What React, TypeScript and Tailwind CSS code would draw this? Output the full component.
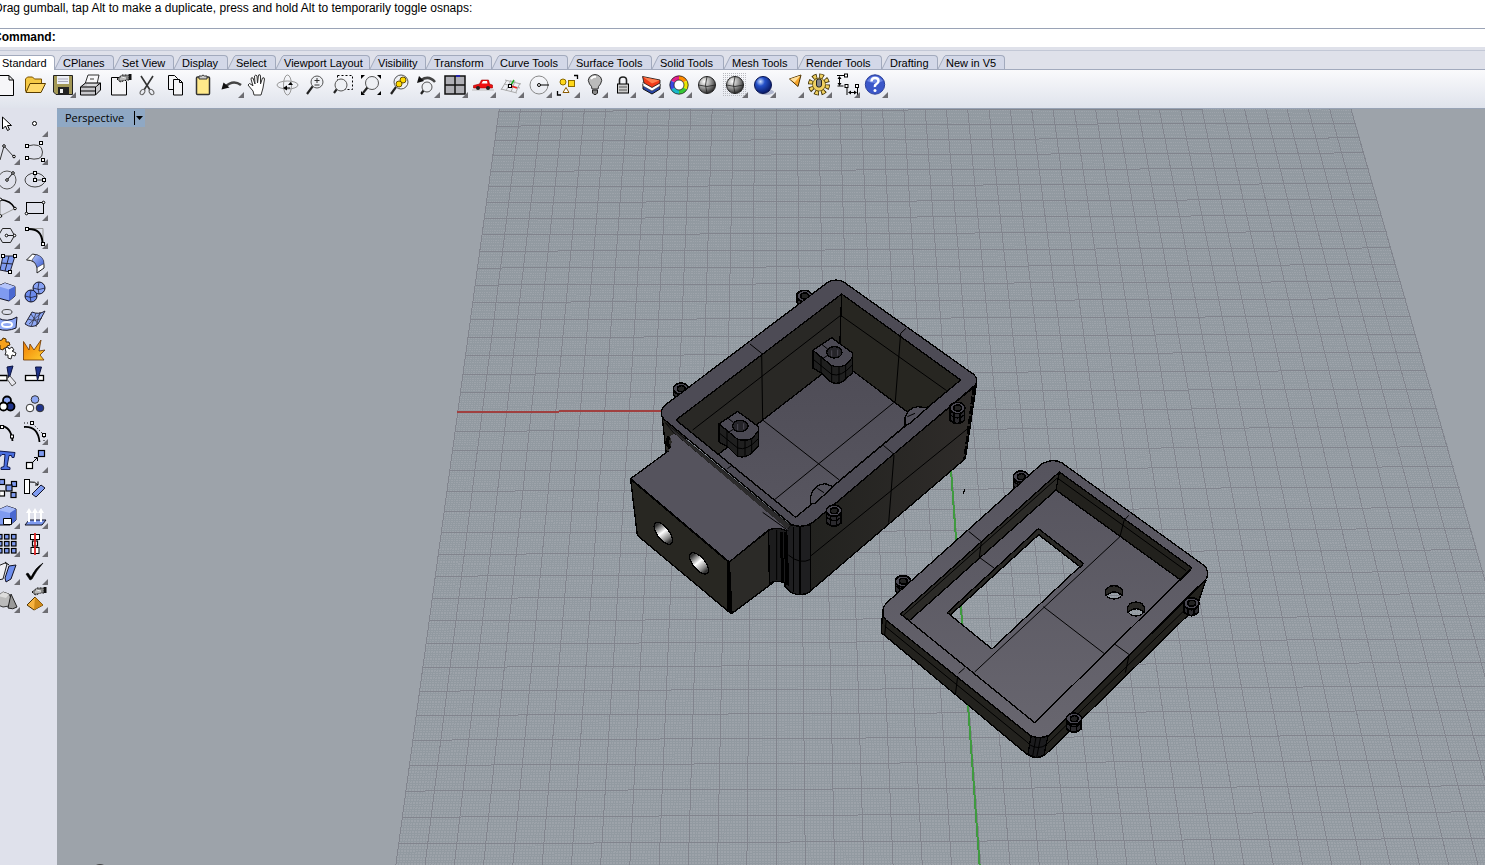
import type { ReactNode } from "react";

interface Tool {
  name: string;
  menu?: boolean;
  icon: ReactNode;
}

const TABS = [
  { label: "CPlanes", width: "w-[59px]" },
  { label: "Set View", width: "w-[60px]" },
  { label: "Display", width: "w-[54px]" },
  { label: "Select", width: "w-[48px]" },
  { label: "Viewport Layout", width: "w-[94px]" },
  { label: "Visibility", width: "w-[56px]" },
  { label: "Transform", width: "w-[66px]" },
  { label: "Curve Tools", width: "w-[76px]" },
  { label: "Surface Tools", width: "w-[84px]" },
  { label: "Solid Tools", width: "w-[72px]" },
  { label: "Mesh Tools", width: "w-[74px]" },
  { label: "Render Tools", width: "w-[84px]" },
  { label: "Drafting", width: "w-[56px]" },
  { label: "New in V5", width: "w-[67px]" },
];

// small square used for control points
const Pt = ({ x, y }: { x: number; y: number }) => (
  <rect x={x - 1.5} y={y - 1.5} width="3" height="3" fill="#fff" stroke="#000" />
);

const Box = ({ x, y, s = 5, fill = "#7f9bf0" }: { x: number; y: number; s?: number; fill?: string }) => (
  <rect x={x} y={y} width={s} height={s} fill={fill} stroke="#000" strokeWidth="1.2" />
);

const Lens = ({ x, y, r = 6, hx = 6, hy = 23 }: { x: number; y: number; r?: number; hx?: number; hy?: number }) => (
  <>
    <path d={`M${x - r * 0.7} ${y + r * 0.7}L${hx} ${hy}`} stroke="#222" strokeWidth="2.2" />
    <circle cx={x} cy={y} r={r} fill="#eef0f4" stroke="#555" />
  </>
);

const Hand = ({ x, y }: { x: number; y: number }) => (
  <g transform={`translate(${x} ${y})`}>
    <path d="M0 5L5 1h7v5H8L4 8 2 7z" fill="#888" stroke="#111" strokeDasharray="2 1" />
    <path d="M4 3l5 1M3 5l6 0" stroke="#eee" />
    <path d="M12 0h2.500v6H12z" fill="#111" />
  </g>
);

const Sphere = ({ fill }: { fill: string }) => (
  <>
    <circle cx="14" cy="14" r="8.5" fill={fill} stroke="#222" />
    <path d="M5.500 14q8.500 3 17 0M14 5.500q-3 8.500 0 17" stroke="#222" fill="none" strokeWidth="0.8" />
  </>
);

const MAIN_TOOLS: Tool[] = [
  { name: "New", icon: <path d="M3 4.500H16l4.500 4.500V24.500H3zM16 4.500V9h4.500" fill="#f6f6f8" stroke="#000" /> },
  {
    name: "Open",
    icon: (
      <>
        <path d="M4.500 20.500V8l2-2h5l2 2h7v4" fill="#f5c945" stroke="#7a5200" />
        <path d="M5 21.500L9 12.500h15.500L20 21.500z" fill="#ffd968" stroke="#5a3d00" />
      </>
    ),
  },
  {
    name: "Save",
    menu: true,
    icon: (
      <>
        <path d="M4.500 4.500h19v19H7l-2.500-2.500z" fill="#a39856" stroke="#222" />
        <rect x="8" y="5" width="12" height="8" fill="#eceef4" />
        <path d="M9 8h10M9 10.500h10" stroke="#aab" />
        <rect x="9" y="16" width="11" height="7" fill="#222" />
        <rect x="11" y="18" width="3" height="4" fill="#eee" />
      </>
    ),
  },
  {
    name: "Print",
    icon: (
      <>
        <path d="M8 13L11 4h11l-2 9z" fill="#f8f8fa" stroke="#333" />
        <path d="M3.500 16l5-4h15v7l-5 5h-15z" fill="#c8c8cc" stroke="#000" />
        <path d="M3.500 16h15v8M18.500 16l5-4M4 20h14" stroke="#000" fill="none" />
        <path d="M10 14h10" stroke="#eee" />
        <path d="M13 8h4" stroke="#999" strokeWidth="2" />
      </>
    ),
  },
  {
    name: "Document Properties",
    icon: (
      <>
        <path d="M6.500 6.500h11l4 4v13.500h-15z" fill="#f4f4f6" stroke="#000" />
        <Hand x={12} y={3} />
      </>
    ),
  },
  {
    name: "Cut",
    icon: (
      <>
        <path d="M8 5l9 14M20 5l-9 14" stroke="#333" strokeWidth="1.600" />
        <ellipse cx="9.500" cy="21" rx="2" ry="3" fill="none" stroke="#666" transform="rotate(35 9.500 21)" />
        <ellipse cx="18.500" cy="21" rx="2" ry="3" fill="none" stroke="#666" transform="rotate(-35 18.500 21)" />
      </>
    ),
  },
  {
    name: "Copy",
    icon: (
      <>
        <path d="M7.500 4.500h6l3 3v11h-9z" fill="#f4f4f6" stroke="#000" />
        <path d="M12.500 8.500h6l3 3v12.500h-9zM18.500 8.500v3h3" fill="#f4f4f6" stroke="#000" />
      </>
    ),
  },
  {
    name: "Paste",
    icon: (
      <>
        <rect x="7.500" y="6" width="13" height="17.500" rx="1" fill="#ffe98a" stroke="#333" strokeWidth="1.500" />
        <path d="M10 5h2.500q1.500-2 3 0H18v3h-8z" fill="#ccc" stroke="#333" />
      </>
    ),
  },
  {
    name: "Undo",
    menu: true,
    icon: (
      <>
        <path d="M8 16q8-8 16-2" fill="none" stroke="#444" strokeWidth="2.500" />
        <path d="M4.500 18.500l2-7 6 5z" fill="#111" />
      </>
    ),
  },
  {
    name: "Pan",
    icon: (
      <path
        d="M9 24l-1-4-5-6q1-3 4 0l1 1L6 8q0-2 2-1l2 6-.5-8q1.500-2 2.500 0l.5 7 1-8q2-1 2 1v8l2-6q2-1 2 1l-1.500 9-2 7z"
        fill="#fff"
        stroke="#333"
      />
    ),
  },
  {
    name: "Rotate View",
    icon: (
      <g fill="none" stroke="#999">
        <ellipse cx="14.500" cy="14" rx="10.500" ry="4" />
        <ellipse cx="14.500" cy="14" rx="4" ry="10" />
        <path d="M10 17l4-2.500v5zM17.500 11l-2.500 3h5z" fill="#000" stroke="none" />
        <path d="M13 17h4" stroke="#000" />
      </g>
    ),
  },
  {
    name: "Zoom Dynamic",
    icon: (
      <>
        <Lens x={16} y={11} />
        <path d="M13.500 9.500h5M16 7v5M13.500 14h5" stroke="#333" />
      </>
    ),
  },
  {
    name: "Zoom Window",
    icon: (
      <>
        <rect x="8.500" y="4.500" width="15" height="14" fill="none" stroke="#000" strokeDasharray="2 2" />
        <Lens x={12} y={14} hx={5} hy={22} />
      </>
    ),
  },
  {
    name: "Zoom Extents",
    icon: (
      <>
        <Lens x={15} y={12} r={6.5} hx={6} hy={22} />
        <path d="M4 4h4l-4 4zM24 4h-4l4 4zM4 24h4l-4-4zM24 24h-4l4-4z" fill="#000" />
      </>
    ),
  },
  {
    name: "Zoom Selected",
    icon: (
      <>
        <Lens x={16} y={11} r={7} />
        <circle cx="18" cy="9" r="3" fill="#ffd900" stroke="#665000" />
        <circle cx="14" cy="13" r="3" fill="#ffd900" stroke="#665000" />
      </>
    ),
  },
  {
    name: "Undo View Change",
    menu: true,
    icon: (
      <>
        <Lens x={14} y={16} r={5} hx={8} hy={23} />
        <path d="M8 9q8-5 14 2" fill="none" stroke="#444" strokeWidth="2.500" />
        <path d="M4 12l2-7 5 5z" fill="#111" />
      </>
    ),
  },
  {
    name: "4 View",
    menu: true,
    icon: (
      <>
        <rect x="4" y="5" width="20" height="18" fill="#b0b0b6" stroke="#111" strokeWidth="1.500" />
        <path d="M14 5v18M4 14h20" stroke="#111" strokeWidth="1.500" />
        <path d="M15 5h4" stroke="#22a" strokeWidth="2" />
      </>
    ),
  },
  {
    name: "Named View",
    menu: true,
    icon: (
      <>
        <path d="M3 19h22" stroke="#bbb" />
        <path d="M4.500 17v-2.500l6-1.500 2-4h7l1 4 3 1v3z" fill="#f01010" stroke="#a00000" strokeWidth="0.600" />
        <path d="M14 10h4l.5 2.500h-6z" fill="#fff" />
        <circle cx="9" cy="17" r="2" fill="#222" />
        <circle cx="19" cy="17" r="2" fill="#222" />
      </>
    ),
  },
  {
    name: "Set CPlane",
    menu: true,
    icon: (
      <>
        <path d="M4 19l6-10M9 20l5-11M14 21l4-11M19 21l4-9M8 9l16 4M7 13l16 4M4 18l16 4" stroke="#aaa" fill="none" />
        <path d="M14 15l6 2" stroke="#e22" strokeWidth="1.500" />
        <path d="M14 14l3-5" stroke="#2a2" strokeWidth="1.500" />
        <Pt x={13} y={15} />
      </>
    ),
  },
  {
    name: "Circle Radius",
    menu: true,
    icon: (
      <>
        <circle cx="14" cy="14" r="9" fill="none" stroke="#888" />
        <path d="M14 14h10" stroke="#000" />
        <circle cx="14" cy="14" r="1.500" fill="#fff" stroke="#000" />
      </>
    ),
  },
  {
    name: "Select",
    menu: true,
    icon: (
      <>
        <circle cx="10" cy="11" r="3" fill="#ffd81a" stroke="#8a6a00" />
        <rect x="15.500" y="9.500" width="6" height="6" fill="#ffd81a" stroke="#8a6a00" />
        <path d="M13 16.500l3 5h-6z" fill="#fff" stroke="#8a5a00" />
        <path d="M21 4.500h3.500V8M4.500 20v4H8" fill="none" stroke="#000" strokeWidth="1.300" />
      </>
    ),
  },
  {
    name: "Hide",
    menu: true,
    icon: (
      <>
        <path d="M11 18q0-3-2.500-5Q6 9 8.500 6q5.500-5 11 0 2.500 3 0 7-2.500 2-2.500 5z" fill="#bbb" stroke="#333" />
        <path d="M10 8q2-3 5-2" stroke="#fff" fill="none" strokeWidth="2" />
        <path d="M11.500 19h5v3l-1.500 1.500h-2l-1.500-1.500z" fill="#888" stroke="#222" />
      </>
    ),
  },
  {
    name: "Lock",
    menu: true,
    icon: (
      <>
        <path d="M10.500 13V9q0-3 3.500-3t3.500 3v4" fill="none" stroke="#222" strokeWidth="1.600" />
        <rect x="8.500" y="13" width="11" height="9" fill="#ccc" stroke="#000" />
        <path d="M10 16h8M10 19h8" stroke="#555" />
      </>
    ),
  },
  {
    name: "Layers",
    menu: true,
    icon: (
      <>
        <path d="M6 13v5l9 5 8-5v-5z" fill="#2846a8" stroke="#111" />
        <path d="M6 11v4l9 5 8-5v-3z" fill="#fff" stroke="#333" strokeWidth="0.600" />
        <path d="M5.500 5.500L7 12l8 4.500 8-4.500V9z" fill="#ef3a18" stroke="#111" strokeWidth="0.800" />
        <path d="M6 6l9 6.500 7.500-3z" fill="#ff8050" />
      </>
    ),
  },
  {
    name: "Object Properties",
    menu: true,
    icon: (
      <g fill="none" strokeWidth="4.500">
        <path d="M14 7a7 7 0 0 1 6 3.500" stroke="#ff8a00" />
        <path d="M20 10.500a7 7 0 0 1 0 7" stroke="#e9e600" />
        <path d="M20 17.500a7 7 0 0 1-6 3.500" stroke="#37c837" />
        <path d="M14 21a7 7 0 0 1-6-3.500" stroke="#18b9c8" />
        <path d="M8 17.500a7 7 0 0 1 0-7" stroke="#3a48e0" />
        <path d="M8 10.500A7 7 0 0 1 14 7" stroke="#e0208a" />
        <circle cx="14" cy="14" r="9.200" stroke="#222" strokeWidth="0.800" />
        <circle cx="14" cy="14" r="5" fill="#fff" stroke="#222" strokeWidth="0.800" />
      </g>
    ),
  },
  { name: "Shade", icon: <Sphere fill="url(#greyBall)" /> },
  {
    name: "Shade Options",
    menu: true,
    icon: (
      <>
        <rect x="2" y="2" width="24" height="24" fill="url(#dots)" />
        <Sphere fill="url(#greyBall)" />
      </>
    ),
  },
  {
    name: "Render",
    menu: true,
    icon: (
      <>
        <ellipse cx="17" cy="21" rx="8" ry="3" fill="#aeb4cc" />
        <circle cx="14" cy="14" r="8.500" fill="url(#blueBall)" stroke="#0a1550" />
      </>
    ),
  },
  {
    name: "Spotlight",
    menu: true,
    icon: (
      <>
        <path d="M12.500 8l11.500-4-3 11.500z" fill="#f7a52b" stroke="#4a3000" />
        <path d="M13 8l10.500-3.500-6 7z" fill="#ffdf9a" />
      </>
    ),
  },
  {
    name: "Options",
    menu: true,
    icon: (
      <>
        <circle cx="14" cy="13.500" r="8.500" fill="none" stroke="#3a2c00" strokeWidth="5" strokeDasharray="4.375 2.300" />
        <circle cx="14" cy="13.500" r="8.500" fill="none" stroke="#f0d060" strokeWidth="3.400" strokeDasharray="2.775 3.900" strokeDashoffset="-0.800" />
        <circle cx="14" cy="13.500" r="6.500" fill="#f0d060" stroke="#4a3a00" strokeWidth="0.600" />
        <rect x="11.500" y="8" width="5" height="8" rx="2" fill="#888" stroke="#222" />
      </>
    ),
  },
  {
    name: "Dimension",
    menu: true,
    icon: (
      <>
        <path d="M4 4.500h10M6.500 7v7M4.500 15h6M14 15v9M24.500 15v9M16 21.500h7" stroke="#000" fill="none" />
        <path d="M6.500 5l-2 3h4zM6.500 15l-2-3h4zM15 21.500l3-2v4zM24 21.500l-3-2v4z" fill="#000" />
        <Pt x={13} y={4.5} />
        <Pt x={13.5} y={15} />
        <Pt x={24} y={15} />
      </>
    ),
  },
  {
    name: "Help",
    menu: true,
    icon: (
      <>
        <circle cx="14" cy="13.500" r="9.700" fill="#3b57c9" stroke="#2a3f9a" />
        <path d="M6 10q8-10 16 0-8 4-16 0" fill="#6c86e4" />
        <path d="M10.500 10.500q0-3.500 3.500-3.500t3.500 3q0 2-2 3T14 16" fill="none" stroke="#fff" strokeWidth="2.400" />
        <circle cx="14" cy="19.500" r="1.500" fill="#fff" />
      </>
    ),
  },
];

// listed left to right, two per row
const SIDE_TOOLS: Tool[] = [
  { name: "Cancel", icon: <path d="M9.500 7v12l3-3 2 4.500 2-1-2-4h4z" fill="#fff" stroke="#000" /> },
  { name: "Point", menu: true, icon: <circle cx="13.500" cy="13.500" r="2" fill="#fff" stroke="#000" /> },
  {
    name: "Polyline",
    menu: true,
    icon: (
      <>
        <path d="M7 22l4-14 10 11" fill="none" stroke="#333" />
        <circle cx="11" cy="8" r="1.300" fill="#fff" stroke="#000" />
        <circle cx="21" cy="18.500" r="1.300" fill="#fff" stroke="#000" />
      </>
    ),
  },
  {
    name: "Curve",
    menu: true,
    icon: (
      <>
        <path d="M6 8q15-4 15.500 6T6 20" fill="none" stroke="#444" />
        <Pt x={6} y={8} />
        <Pt x={20} y={5} />
        <Pt x={6} y={20} />
        <Pt x={22} y={22} />
      </>
    ),
  },
  {
    name: "Circle",
    menu: true,
    icon: (
      <>
        <circle cx="14" cy="14" r="9" fill="none" stroke="#555" />
        <path d="M14 14l6-7" stroke="#000" />
        <circle cx="14" cy="14" r="1.300" fill="#fff" stroke="#000" />
        <circle cx="20" cy="7" r="1.300" fill="#fff" stroke="#000" />
      </>
    ),
  },
  {
    name: "Ellipse",
    menu: true,
    icon: (
      <>
        <ellipse cx="14" cy="14" rx="10" ry="7" fill="none" stroke="#444" />
        <path d="M14 7v7h9" fill="none" stroke="#444" />
        <Pt x={14} y={7} />
        <Pt x={14} y={14} />
        <Pt x={23} y={14} />
      </>
    ),
  },
  {
    name: "Arc",
    menu: true,
    icon: (
      <>
        <path d="M7 22V5.500" stroke="#888" />
        <path d="M7 5.500q11 1 15 9" fill="none" stroke="#000" strokeWidth="1.500" />
        <path d="M22 14.500L7 22" stroke="#999" />
        <circle cx="22" cy="14.500" r="1.300" fill="#fff" stroke="#000" />
        <circle cx="7.500" cy="22" r="1.300" fill="#fff" stroke="#000" />
        <circle cx="7.500" cy="5.500" r="1.300" fill="#fff" stroke="#000" />
      </>
    ),
  },
  {
    name: "Rectangle",
    menu: true,
    icon: (
      <>
        <rect x="5.500" y="8.500" width="17" height="11" fill="none" stroke="#000" />
        <circle cx="22.500" cy="8.500" r="1.300" fill="#fff" stroke="#000" />
        <circle cx="5.500" cy="19.500" r="1.300" fill="#fff" stroke="#000" />
      </>
    ),
  },
  {
    name: "Polygon",
    menu: true,
    icon: (
      <>
        <path d="M5.500 13.500l4-7h8l4 7-4 7h-8zM13.500 13.500H21" fill="none" stroke="#222" />
        <circle cx="13.500" cy="13.500" r="1.300" fill="#fff" stroke="#000" />
        <circle cx="21.500" cy="13.500" r="1.300" fill="#fff" stroke="#000" />
      </>
    ),
  },
  {
    name: "Fillet",
    menu: true,
    icon: (
      <>
        <path d="M6 6.500h16v16" fill="none" stroke="#999" />
        <path d="M6 7q15-1 15.500 14" fill="none" stroke="#000" strokeWidth="2" />
        <Pt x={6} y={7} />
        <Pt x={22} y={22} />
      </>
    ),
  },
  {
    name: "Surface",
    menu: true,
    icon: (
      <>
        <path d="M10 6h12l-5 16-10-2z" fill="#7f9bf0" stroke="#223" />
        <path d="M8.500 13l11 1M16 6l-4 15" stroke="#223" fill="none" />
        <Pt x={10} y={6} />
        <Pt x={22} y={6} />
        <Pt x={17} y={22} />
      </>
    ),
  },
  {
    name: "Sweep",
    menu: true,
    icon: (
      <>
        <path d="M5.500 10l6-6q11 1 11.500 11v3l-7 5v-5q-1-8-10.500-8z" fill="#fff" stroke="#222" />
        <path d="M11 10l4-5.500q8 2 8 9l-7 4q-1-5-5-7.500z" fill="url(#blueSheet)" stroke="#334" strokeWidth="0.600" />
      </>
    ),
  },
  {
    name: "Box",
    menu: true,
    icon: (
      <>
        <path d="M5 8l7-3 10 3.500V18l-6 5-11-3z" fill="#7f9bf0" stroke="#112" />
        <path d="M5 8l7-3 10 3.500-6 3z" fill="#b4c4fa" />
        <path d="M16 11.500l6-3V18l-6 5z" fill="#4a68d0" />
      </>
    ),
  },
  {
    name: "Boolean",
    menu: true,
    icon: (
      <g stroke="#112">
        <circle cx="18" cy="10" r="6" fill="#88a2f4" />
        <circle cx="10" cy="18" r="6" fill="#6c8bec" />
        <path d="M12 10q6 3 12 0M18 4q-2 6 0 12M4 18q6 3 12 0M10 12q-2 6 0 12" fill="none" strokeWidth="0.700" />
      </g>
    ),
  },
  {
    name: "Project",
    menu: true,
    icon: (
      <>
        <ellipse cx="14" cy="6" rx="5" ry="2.500" fill="none" stroke="#444" />
        <path d="M5 12q9 5 19-1l-1 11q-9 4-18 1z" fill="#8ea8f5" stroke="#112" />
        <ellipse cx="14" cy="18.500" rx="5" ry="2.500" fill="#8ea8f5" stroke="#fff" strokeWidth="2" />
      </>
    ),
  },
  {
    name: "Mesh",
    menu: true,
    icon: (
      <>
        <path d="M4 18l7-12q7 3 13-1l-7 13q-6 5-13 0z" fill="#8ea8f5" stroke="#223" />
        <path d="M7 13q7 3 14-1M15 7l-5 14M19 6l-4 15M8 18l12-11M10 8l7 10" fill="none" stroke="#334" strokeWidth="0.800" />
      </>
    ),
  },
  {
    name: "Join",
    icon: (
      <>
        <path d="M5 7l4-1 1-2 3 1v3l3 0 1 3-3 1 0 3-3-1-1 2-3-1V11H5z" fill="#f7a11a" stroke="#4a2c00" />
        <path d="M12 14l3-1 1 2 3-2 2 3-2 1 4 2-1 3-3-1-1 4-3-1 0-3-3 0 1-3z" fill="#fff" stroke="#222" />
      </>
    ),
  },
  {
    name: "Explode",
    icon: <path d="M2.500 26V7.500L8 16l1-6 4 6 7-10-2 11 6-1-5 5 4 5z" fill="url(#blast)" stroke="#6a3300" strokeWidth="0.800" />,
  },
  {
    name: "Trim",
    icon: (
      <>
        <path d="M5 13.500h9v5H5z" fill="#fff" stroke="#000" strokeWidth="1.300" />
        <path d="M14 5l6-1-4 13z" fill="#20348c" stroke="#0a1240" />
        <path d="M14 17l3-3 6 7-4 3z" fill="#e8e8ee" stroke="#555" />
      </>
    ),
  },
  {
    name: "Split",
    icon: (
      <>
        <rect x="4.500" y="13.500" width="18" height="5" fill="#fff" stroke="#000" strokeWidth="1.300" />
        <path d="M14.500 5h6l-4 13.500z" fill="#20348c" stroke="#0a1240" />
      </>
    ),
  },
  {
    name: "Group",
    menu: true,
    icon: (
      <g stroke="#000" strokeWidth="1.800">
        <circle cx="14" cy="10.500" r="4" fill="#8ea8f5" />
        <circle cx="17.500" cy="16.500" r="4" fill="#20348c" />
        <circle cx="10.500" cy="16.500" r="4" fill="#fff" />
      </g>
    ),
  },
  {
    name: "Ungroup",
    icon: (
      <g stroke="#333">
        <circle cx="14" cy="9.500" r="3.800" fill="#8ea8f5" />
        <circle cx="9" cy="18" r="3.800" fill="#fff" />
        <circle cx="19" cy="18" r="3.800" fill="#20348c" />
      </g>
    ),
  },
  {
    name: "Edit Points",
    icon: (
      <>
        <path d="M5 8q13-1 14.500 15" fill="none" stroke="#000" strokeWidth="1.800" />
        <Pt x={9} y={9} />
        <Pt x={19} y={18.5} />
      </>
    ),
  },
  {
    name: "Control Points",
    menu: true,
    icon: (
      <>
        <path d="M3 9q14-1 15.500 15" fill="none" stroke="#000" strokeWidth="1.800" />
        <path d="M3 5h8l12 12v7" fill="none" stroke="#000" strokeDasharray="1 2" />
        <Pt x={11} y={5} />
        <Pt x={23} y={17} />
      </>
    ),
  },
  {
    name: "Text",
    icon: (
      <path d="M6 5l16 1.500-1 5h-2l-.5-2h-2.500l-2 11 3 1v2H8v-2l3-1 1-12H9l-2 2z" fill="#4a6fe0" stroke="#111a50" />
    ),
  },
  {
    name: "Move",
    menu: true,
    icon: (
      <>
        <Box x={5.5} y={16.5} s={6} fill="#fff" />
        <Box x={17.5} y={4.5} s={6} />
        <path d="M12 16l4-4M16.500 15v-3.500H13" fill="none" stroke="#000" />
      </>
    ),
  },
  {
    name: "Copy Objects",
    icon: (
      <>
        <Box x={6.5} y={5.5} />
        <Box x={18.5} y={7.5} />
        <Box x={13} y={11} s={6} />
        <Box x={6.5} y={17} fill="#fff" />
        <Box x={18} y={18.5} />
      </>
    ),
  },
  {
    name: "Rotate",
    icon: (
      <>
        <rect x="3.500" y="5.500" width="5" height="14" fill="#fff" stroke="#000" />
        <path d="M11 20l9-9 4 3-9 9z" fill="#7f9bf0" stroke="#112" />
        <path d="M9 8q5-1 8 3M17 7.500V11h-3" fill="none" stroke="#000" />
      </>
    ),
  },
  {
    name: "Solid Edit",
    menu: true,
    icon: (
      <>
        <path d="M5 8l9-4 9 3v11l-6 5H5z" fill="#7f9bf0" stroke="#112" />
        <path d="M5 8l9-4 9 3-6 4z" fill="#a6baf8" />
        <path d="M17 11l6-4v11l-6 5z" fill="#4a68d0" />
        <path d="M10.500 16.500h8v6h-8z" fill="#fff" stroke="#000" />
      </>
    ),
  },
  {
    name: "Extrude",
    menu: true,
    icon: (
      <>
        <path d="M4 23l4-5h17l-4 5z" fill="#7f9bf0" stroke="#112" />
        <path d="M8 20V10M14 20V10M20 20V10" stroke="#fff" strokeWidth="2" />
        <path d="M8 6l3 5H5zM14 6l3 5h-6zM20 6l3 5h-6z" fill="#fff" />
      </>
    ),
  },
  {
    name: "Array",
    menu: true,
    icon: (
      <>
        {[4, 11, 18].map((y) => [4, 11, 18].map((x) => <Box key={`${x}-${y}`} x={x + 0.5} y={y + 0.5} s={4.5} />))}
      </>
    ),
  },
  {
    name: "Align",
    menu: true,
    icon: (
      <>
        <Box x={11.5} y={11} fill="#fff" />
        <rect x="9.500" y="4.500" width="9" height="5" fill="#fff" stroke="#000" />
        <rect x="10" y="17.500" width="8" height="6" fill="#fff" stroke="#000" />
        <path d="M14 3v22" stroke="#d22" strokeWidth="1.800" />
      </>
    ),
  },
  {
    name: "Bend",
    menu: true,
    icon: (
      <>
        <path d="M5 8l7-3 2 1-4 15-5 1z" fill="#f0f0f4" stroke="#222" />
        <path d="M12 20l4-12 7-1-5 14-5 3z" fill="#6f8fee" stroke="#112" />
        <path d="M12 4l4 3" stroke="#000" />
      </>
    ),
  },
  { name: "Check", menu: true, icon: <path d="M5 16l2-1 3 4q4-9 12-14-7 8-11 16l-2 1z" fill="#000" stroke="#000" strokeWidth="0.600" /> },
  {
    name: "Primitives",
    menu: true,
    icon: (
      <>
        <path d="M5 10l5-4 6 2 2 4-2 8-6 1-5-2z" fill="#bbb" stroke="#333" />
        <path d="M5 10l5-4 6 2-3 4z" fill="#ddd" />
        <path d="M18 8l6 13q-4 3-9 1z" fill="#999" stroke="#222" />
      </>
    ),
  },
  {
    name: "Render Tools",
    menu: true,
    icon: (
      <>
        <path d="M14 11l8 8-9 5-7-5z" fill="#f7b340" stroke="#4a3000" />
        <path d="M14 11l-1 13 9-5z" fill="#cf8a1a" />
        <Hand x={11} y={1} />
      </>
    ),
  },
];

function ToolButton({ tool }: { tool: Tool }) {
  return (
    <button type="button" aria-label={tool.name} className="size-7 shrink-0">
      <svg viewBox="0 0 28 28" className="block size-7">
        {tool.icon}
        {tool.menu && <path d="M27 21v6h-6z" fill="#6d6d72" />}
      </svg>
    </button>
  );
}

function TabBar() {
  return (
    <div role="tablist" className="flex h-[19px] items-end overflow-hidden bg-[#dfe1ea] text-[11px] text-black">
      <button
        type="button"
        role="tab"
        aria-selected="true"
        className="h-[15px] w-[55px] shrink-0 rounded-tr-sm border-t border-r border-[#a2aabd] bg-white pl-0.5 text-left leading-[14px]"
      >
        Standard
      </button>
      {TABS.map((tab) => (
        <button
          key={tab.label}
          type="button"
          role="tab"
          aria-selected="false"
          className={`flex h-[15px] shrink-0 border-b border-[#a2aabd] ${tab.width}`}
        >
          <svg viewBox="0 0 8 14" className="h-[14px] w-2 shrink-0">
            <path d="M0 14L6 2Q7 .5 8 .5V14z" fill="#d3d8e8" />
            <path d="M0 14L6 2Q7 .5 8 .5" fill="none" stroke="#a2aabd" />
          </svg>
          <span className="h-[14px] min-w-0 flex-1 rounded-tr border-t border-r border-[#a2aabd] bg-[#d3d8e8] text-left leading-[14px] whitespace-nowrap">
            {tab.label}
          </span>
        </button>
      ))}
      <div className="h-px flex-1 bg-[#a2aabd]" />
    </div>
  );
}

// Construction plane: 40 x 40 major cells, 10 minor cells in each
const VP_X = 776;
const VP_Y = -1914;
const DEPTH = 121.3;

const rowY = (k: number) => (2326 * DEPTH) / (DEPTH - k) + VP_Y;
const leftX = (y: number) => VP_X - 0.1368 * (y - VP_Y);
const rightX = (y: number) => VP_X + 0.2842 * (y - VP_Y);

function rowPath(k: number) {
  const y = rowY(k);
  const slope = 0.0035 + (y - 123) * 0.0000022;
  const x1 = leftX(y);
  const x2 = rightX(y);
  return `M${x1.toFixed(1)} ${y.toFixed(1)}L${x2.toFixed(1)} ${(y - slope * (x2 - x1)).toFixed(1)}`;
}

function colPath(k: number) {
  const slope = -0.1368 + (0.421 * (k + 20)) / 40;
  const at = (y: number) => (VP_X + slope * (y - VP_Y)).toFixed(1);
  return `M${at(80)} 80L${at(871)} 871`;
}

const range = (from: number, to: number) => Array.from({ length: to - from + 1 }, (_, i) => from + i);
const majors = range(-20, 20);
const minors = range(-200, 200).filter((k) => k % 10 !== 0);

const majorGrid = majors.map((k) => rowPath(k) + colPath(k)).join("");
const minorRows = minors.map((k) => rowPath(k / 10)).join("");
const minorCols = minors.map((k) => colPath(k / 10)).join("");

function Post({ x, y }: { x: number; y: number }) {
  return (
    <g transform={`translate(${x} ${y})`}>
      <path d="M-64 -6V48L-38 62 -12 88Q5 98 25 88L54 62V8z" fill="#1f1f1f" />
      <path d="M-64 -6L-8 -44 52 0Q60 10 50 20L35 38Q15 46-8 40z" fill="#4b4953" />
      <path
        d="M-40 14V62M-8 40V90M14 44V94M34 40V84M-62 22L-8 66Q20 76 54 38M-38 -24L-20 -10M-34 18L-18 8"
        fill="none"
        strokeWidth="3"
      />
      <ellipse cx="0" cy="0" rx="23" ry="17" fill="#26252a" />
      <path d="M-8 -6V12M10 -8V10" stroke="#4b4953" strokeWidth="3" />
    </g>
  );
}

function Lug({ x, y, h = 36 }: { x: number; y: number; h?: number }) {
  return (
    <g transform={`translate(${x} ${y})`} strokeWidth="5">
      <path d={`M-22 0V${h}Q0 ${h + 22} 22 ${h}V0z`} fill="#2b2a2e" />
      <path d={`M-22 ${h - 16}Q0 ${h + 4} 22 ${h - 16}M-10 14V${h + 8}M8 14V${h + 8}`} fill="none" strokeWidth="4" />
      <ellipse cx="0" cy="0" rx="23" ry="17" fill="#4a4852" />
      <ellipse cx="1" cy="0" rx="12" ry="9" fill="#222" />
    </g>
  );
}

function BottomCase() {
  return (
    <g transform="translate(620 270) scale(0.33333)" stroke="#000" strokeWidth="4" strokeLinejoin="round">
      <Lug x={553} y={78} h={20} />
      <Lug x={183} y={356} h={20} />
      {/* outer walls */}
      <path d="M126 435L138 545 190 560 200 480z" fill="#2a2926" />
      <path d="M560 768L1069 345 1036 566 570 964z" fill="url(#wall)" />
      <path d="M500 770L520 765H572V964Q545 982 515 968L495 950z" fill="#1e1e20" />
      <path d="M540 770V972M520 770V966" strokeWidth="4" />
      <path d="M572 858L1048 472M505 855Q540 885 572 868M822 555L806 758" fill="none" strokeWidth="3" />
      <path d="M1062 350L1034 566" fill="none" strokeWidth="8" strokeDasharray="24 6" />
      {/* rim */}
      <path
        d="M126 418Q130 408 145 398L622 38Q648 22 674 38L1062 314Q1076 326 1066 345L578 758Q548 776 515 764L132 448Q120 436 126 418z"
        fill="#4d4b55"
      />
      {/* cavity */}
      <path d="M168 450L665 72 660 272 295 553z" fill="#292825" />
      <path d="M665 72L1022 330 885 443 658 272z" fill="#272621" />
      <path d="M295 553L658 272 885 443 527 742z" fill="url(#floor)" />
      <path d="M168 450L527 742 1022 330" fill="none" />
      <path
        d="M218 480L662 136 980 362M425 250L428 450 658 630M842 190L826 394 465 688M390 222L425 250M842 190L858 175M790 526L822 553M322 596L336 586"
        fill="none"
        strokeWidth="3"
      />
      <path d="M855 468V442Q865 412 895 410L922 414 870 460zM572 702V678Q580 645 615 641L640 650 585 700z" fill="#53515b" />
      <path d="M862 440L885 430M592 655L612 668" fill="none" strokeWidth="3" />
      <Post x={643} y={247} />
      <Post x={361} y={468} />
      {/* battery compartment */}
      <path d="M136 458L162 490 500 782 512 766z" fill="#2c2b2c" strokeWidth="2" />
      <path d="M32 626L145 543Q162 520 150 500L162 490 505 780 448 778 328 876z" fill="#55535d" stroke="none" />
      <path d="M145 543L32 626 328 876 448 778" fill="none" />
      <path d="M148 500Q135 515 150 535" fill="none" strokeWidth="10" />
      <path d="M32 628L325 876 332 1030 52 796z" fill="#282722" />
      <path d="M328 876L448 780 462 936 336 1030z" fill="#2b2a27" />
      <path d="M446 782Q465 768 500 782L506 945Q480 925 448 940z" fill="#1c1c1d" />
      <path d="M325 876V1025M484 785L488 940M496 785L500 945" strokeWidth="9" fill="none" />
      <path d="M428 727L505 782M470 780V930" strokeWidth="3" fill="none" />
      <ellipse cx="130" cy="790" rx="39" ry="18" transform="rotate(53 130 790)" fill="url(#metal)" />
      <ellipse cx="237" cy="880" rx="39" ry="18" transform="rotate(50 237 880)" fill="url(#metal)" />
      <Lug x={1012} y={414} />
      <Lug x={642} y={722} />
      <path d="M1034 657L1030 673" />
    </g>
  );
}

function TopCase() {
  return (
    <g transform="translate(870 450) scale(0.33333)" stroke="#000" strokeWidth="4" strokeLinejoin="round">
      <Lug x={453} y={80} h={30} />
      <Lug x={99} y={394} h={30} />
      {/* outer walls */}
      <path d="M38 480L34 548 470 912Q500 932 525 915L980 470 1008 390 530 860 480 850z" fill="#23221e" />
      <path d="M484 855L474 912Q500 932 522 914L534 858z" fill="#1b1b1d" />
      <path d="M512 862L500 922M498 862L488 918M44 528L470 875 480 885Q505 900 528 885L980 445M264 672L256 735M778 612L766 668M50 500L44 555" fill="none" strokeWidth="3" />
      {/* rim, with the screen window and button holes cut through */}
      <path
        fillRule="evenodd"
        d="M40 478Q42 465 55 454L515 42Q545 24 575 38L1000 345Q1018 358 1010 385L538 855Q508 870 480 856L48 510Q36 500 40 478zM232 488L505 236 640 340 366 597zM706 427a26 20 0 1 0 52 0a26 20 0 1 0-52 0zM772 477a26 21 0 1 0 52 0a26 21 0 1 0-52 0z"
        fill="url(#lid)"
      />
      <path d="M92 492L568 66 558 120 118 512z" fill="#2b2a27" />
      <path d="M568 66L966 354 932 390 558 120z" fill="#22211d" />
      <path d="M100 496L562 84 948 362" fill="none" strokeWidth="3" />
      <path d="M92 492L494 818 966 354" fill="none" />
      <path
        d="M296 244L334 275 328 322 372 354M776 196L762 212 750 260 314 666M520 470L702 610M735 583L778 614M266 670L284 654"
        fill="none"
        strokeWidth="3"
      />
      {/* thickness of the cut-outs */}
      <path d="M232 488L505 236 640 340 632 352 506 254 242 494z" fill="#2a2926" />
      <path d="M706 427a26 20 0 0 1 52 0l-2 10q-22-22-48 0zM772 477a26 21 0 0 1 52 0l-2 10q-22-22-48 0z" fill="#2a2926" />
      <Lug x={964} y={460} h={26} />
      <Lug x={612} y={806} h={30} />
    </g>
  );
}

function Scene() {
  return (
    <svg
      role="img"
      aria-label="Perspective view of an enclosure and its lid"
      viewBox="57 109 1428 756"
      preserveAspectRatio="xMinYMin slice"
      className="absolute inset-0 size-full"
    >
      <defs>
        <linearGradient id="wall" x1="0" y1="0" x2="1" y2="0">
          <stop offset="0" stopColor="#22221f" />
          <stop offset="1" stopColor="#2f2c2a" />
        </linearGradient>
        <linearGradient id="floor" x1="0" y1="0" x2="0" y2="1">
          <stop offset="0" stopColor="#4e4c56" />
          <stop offset="1" stopColor="#585660" />
        </linearGradient>
        <linearGradient id="lid" x1="0" y1="0" x2="0" y2="1">
          <stop offset="0" stopColor="#55535d" />
          <stop offset="1" stopColor="#68666f" />
        </linearGradient>
        <linearGradient id="metal">
          <stop offset="0.1" stopColor="#333" />
          <stop offset="0.45" stopColor="#fff" />
          <stop offset="0.75" stopColor="#888" />
          <stop offset="0.9" stopColor="#333" />
        </linearGradient>
      </defs>
      <g fill="none" shapeRendering="crispEdges">
        <path d={minorRows} stroke="#929aa1" />
        <path d={minorCols} stroke="#929aa1" />
        <path d={majorGrid} stroke="#81848d" />
        <path d="M457 412L662 411" stroke="#a04040" strokeWidth="2" />
        <path d="M951 470L980 871" stroke="#3f9a3f" strokeWidth="2" />
      </g>
      <g shapeRendering="crispEdges">
        <BottomCase />
        <TopCase />
      </g>
      <path d="M96 865q4-2 8 0z" fill="#444" />
    </svg>
  );
}

function IconDefs() {
  return (
    <svg className="absolute size-0" aria-hidden="true">
      <defs>
        <radialGradient id="greyBall" cx="0.35" cy="0.3" r="0.75">
          <stop offset="0" stopColor="#fff" />
          <stop offset="0.5" stopColor="#999" />
          <stop offset="1" stopColor="#222" />
        </radialGradient>
        <radialGradient id="blueBall" cx="0.35" cy="0.3" r="0.75">
          <stop offset="0" stopColor="#cfe0ff" />
          <stop offset="0.35" stopColor="#2450c8" />
          <stop offset="1" stopColor="#061560" />
        </radialGradient>
        <linearGradient id="blueSheet" x1="0" y1="0" x2="1" y2="1">
          <stop offset="0" stopColor="#b8c8fa" />
          <stop offset="1" stopColor="#3a5cd0" />
        </linearGradient>
        <linearGradient id="blast" x1="0" y1="0" x2="1" y2="1">
          <stop offset="0" stopColor="#f07800" />
          <stop offset="1" stopColor="#ffcf30" />
        </linearGradient>
        <pattern id="dots" width="2" height="2" patternUnits="userSpaceOnUse">
          <rect width="1" height="1" fill="#b9bac0" />
        </pattern>
      </defs>
    </svg>
  );
}

export default function App() {
  return (
    <div className="flex h-screen flex-col overflow-hidden bg-[#dfe2ec] font-['Liberation_Sans',Arial,sans-serif] text-black">
      <IconDefs />
      <header className="shrink-0">
        <div className="h-7 overflow-hidden bg-white">
          <p className="-ml-1.5 text-[12px] leading-4 whitespace-nowrap">
            Drag gumball, tap Alt to make a duplicate, press and hold Alt to temporarily toggle osnaps:
          </p>
        </div>
        <div className="flex h-[19px] items-start overflow-hidden border-t border-[#9aa3b6] bg-white">
          <label htmlFor="command" className="-ml-[7px] text-[12px] leading-4 font-bold">
            Command:
          </label>
          <input id="command" type="text" className="ml-1 min-w-0 flex-1 text-[12px] leading-4 outline-none" />
        </div>
        <div className="h-1 border-b border-[#c3c8d6] bg-[#dfe1ea]" />
        <TabBar />
        <div className="flex h-[38px] overflow-hidden bg-linear-to-b from-[#fafafc] to-[#dfe3ec] pt-px">
          <div role="toolbar" aria-label="Standard" className="-ml-[7px] flex">
            {MAIN_TOOLS.map((tool) => (
              <ToolButton key={tool.name} tool={tool} />
            ))}
          </div>
        </div>
      </header>
      <div className="flex min-h-0 flex-1">
        <aside className="w-[57px] shrink-0 overflow-hidden bg-[#dfe1eb] pt-0.5">
          <div className="-ml-[7px] grid w-14 grid-cols-2">
            {SIDE_TOOLS.map((tool) => (
              <ToolButton key={tool.name} tool={tool} />
            ))}
          </div>
        </aside>
        <main className="relative min-w-0 flex-1 overflow-hidden border-t border-[#98a3b5] bg-[#9da3aa]">
          <Scene />
          <button
            type="button"
            className="relative flex h-[18px] items-center bg-[#8fa8c4] pl-2 font-['Open_Sans',sans-serif] text-[11px] leading-4"
          >
            <span className="w-[68px] text-left">Perspective</span>
            <svg viewBox="0 0 12 16" className="h-4 w-3">
              <path d="M1.500 1v14" stroke="#000" />
              <path d="M3 6h7l-3.500 4z" fill="#000" />
            </svg>
          </button>
        </main>
      </div>
    </div>
  );
}
